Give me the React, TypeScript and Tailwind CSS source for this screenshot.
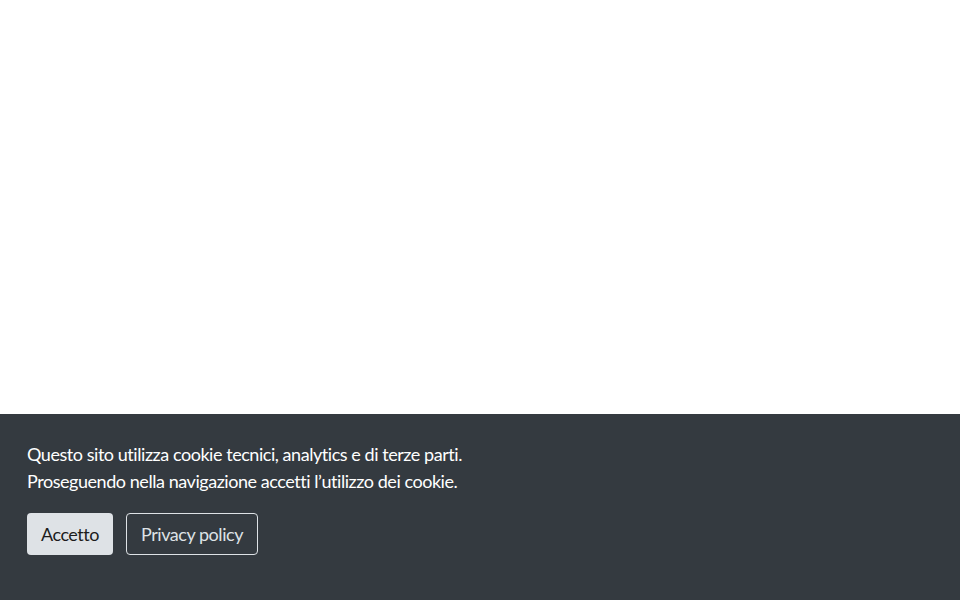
import React from "react";

export default function App() {
  return (
    <div className="w-[960px] h-[600px] flex flex-col bg-white">
      <div className="flex-1" />
      <div className="bg-[#343a40] h-[186px] px-[27px] pt-[27px] font-['Lato',sans-serif] text-[18px] leading-[27px] tracking-[-0.45px] text-white">
        <p>Questo sito utilizza cookie tecnici, analytics e di terze parti.</p>
        <p>Proseguendo nella navigazione accetti l’utilizzo dei cookie.</p>
        <div className="flex gap-[13px] mt-[18px]">
          <button className="h-[42px] w-[86px] rounded bg-[#dee2e6] text-[#1c1c1c]">Accetto</button>
          <button className="h-[42px] w-[132px] rounded border border-[#dee2e6] text-[#dee2e6]">Privacy policy</button>
        </div>
      </div>
    </div>
  );
}
